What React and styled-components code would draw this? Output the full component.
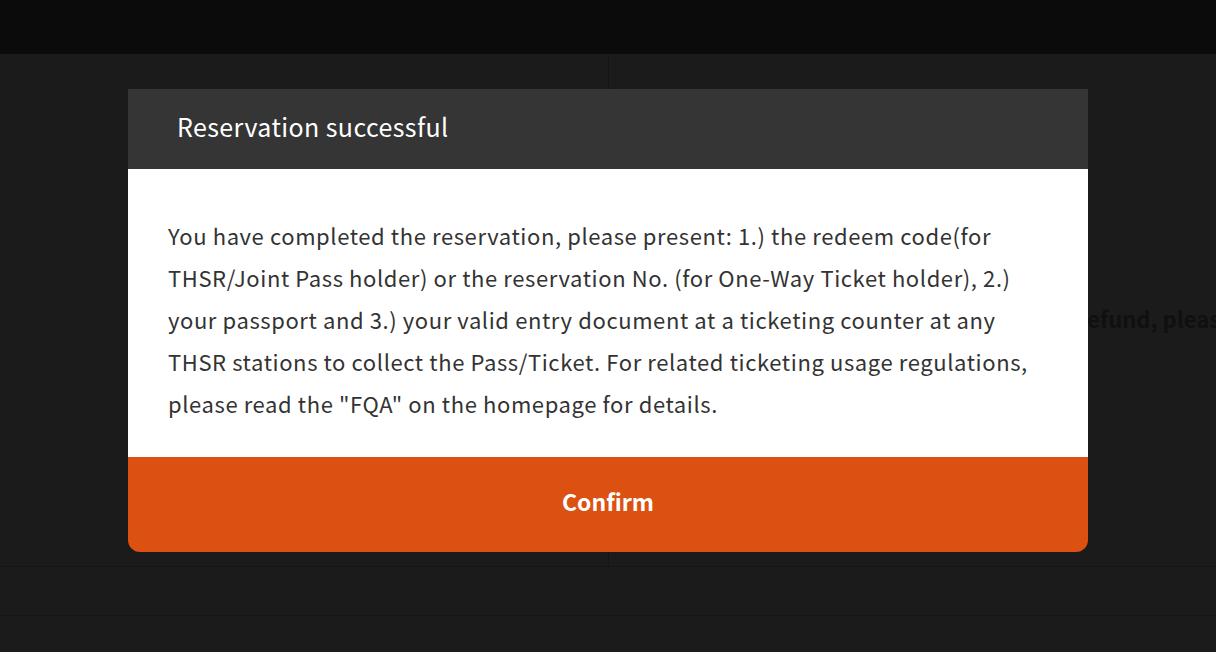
import React from 'react'
import styled, { createGlobalStyle } from 'styled-components'

const GlobalStyle = createGlobalStyle`
  html, body {
    margin: 0;
    padding: 0;
    background: #1b1b1b;
    font-family: "Noto Sans CJK KR", "Noto Sans", sans-serif;
  }
  #root {
    width: 1216px;
    height: 652px;
    overflow: hidden;
    position: relative;
  }
`

const Page = styled.div`
  width: 100%;
  height: 652px;
  display: flex;
  flex-direction: column;
  background: #1b1b1b;
`

const TopBar = styled.div`
  height: 54px;
  flex-shrink: 0;
  background: #0b0b0b;
`

const Main = styled.div`
  height: 512px;
  display: grid;
  grid-template-columns: 608px 1fr;
  border-bottom: 1px solid #151515;
`

const Column = styled.div`
  border-left: ${p => (p.$divider ? '1px solid #151515' : 'none')};
  padding: ${p => p.$pad || '0'};
  overflow: hidden;
`

const GhostText = styled.p`
  margin: 0;
  white-space: nowrap;
  font-size: 22px;
  font-weight: 700;
  line-height: 34px;
  color: #101010;
`

const FooterRow = styled.div`
  height: 48px;
  border-bottom: 1px solid #151515;
`

const Overlay = styled.div`
  position: absolute;
  inset: 0;
  display: flex;
  justify-content: center;
  padding-top: 89px;
  box-sizing: border-box;
`

const Modal = styled.div`
  width: 960px;
  height: 463px;
  display: flex;
  flex-direction: column;
  border-radius: 0 0 12px 12px;
  overflow: hidden;
`

const Header = styled.div`
  height: 80px;
  flex-shrink: 0;
  box-sizing: border-box;
  background: #353535;
  display: flex;
  align-items: center;
  padding: 0 0 7px 49px;
  color: #fff;
  font-size: 25px;
  letter-spacing: 0.4px;
`

const Body = styled.div`
  background: #fff;
  height: 288px;
  flex-shrink: 0;
  box-sizing: border-box;
  padding: 45px 40px 0;
  color: #333;
  font-size: 22px;
  line-height: 42px;
  letter-spacing: 0.6px;
  white-space: nowrap;
`

const ConfirmButton = styled.button`
  flex: 1;
  border: none;
  padding: 0 0 8px;
  background: #dc5012;
  color: #fff;
  font-family: inherit;
  font-size: 23px;
  font-weight: 700;
  cursor: pointer;
`

const lines = [
  'You have completed the reservation, please present: 1.) the redeem code(for',
  'THSR/Joint Pass holder) or the reservation No. (for One-Way Ticket holder), 2.)',
  'your passport and 3.) your valid entry document at a ticketing counter at any',
  'THSR stations to collect the Pass/Ticket. For related ticketing usage regulations,',
  'please read the "FQA" on the homepage for details.',
]

const App = () => {
  return (
    <>
      <GlobalStyle />
      <Page>
        <TopBar />
        <Main>
          <Column />
          <Column $divider $pad="247px 0 0 469px">
            <GhostText>refund, please contact the counter</GhostText>
          </Column>
        </Main>
        <FooterRow />
      </Page>

      <Overlay>
        <Modal>
          <Header>Reservation successful</Header>
          <Body>
            {lines.map((line, i) => (
              <div key={i}>{line}</div>
            ))}
          </Body>
          <ConfirmButton>Confirm</ConfirmButton>
        </Modal>
      </Overlay>
    </>
  )
}

export default App
